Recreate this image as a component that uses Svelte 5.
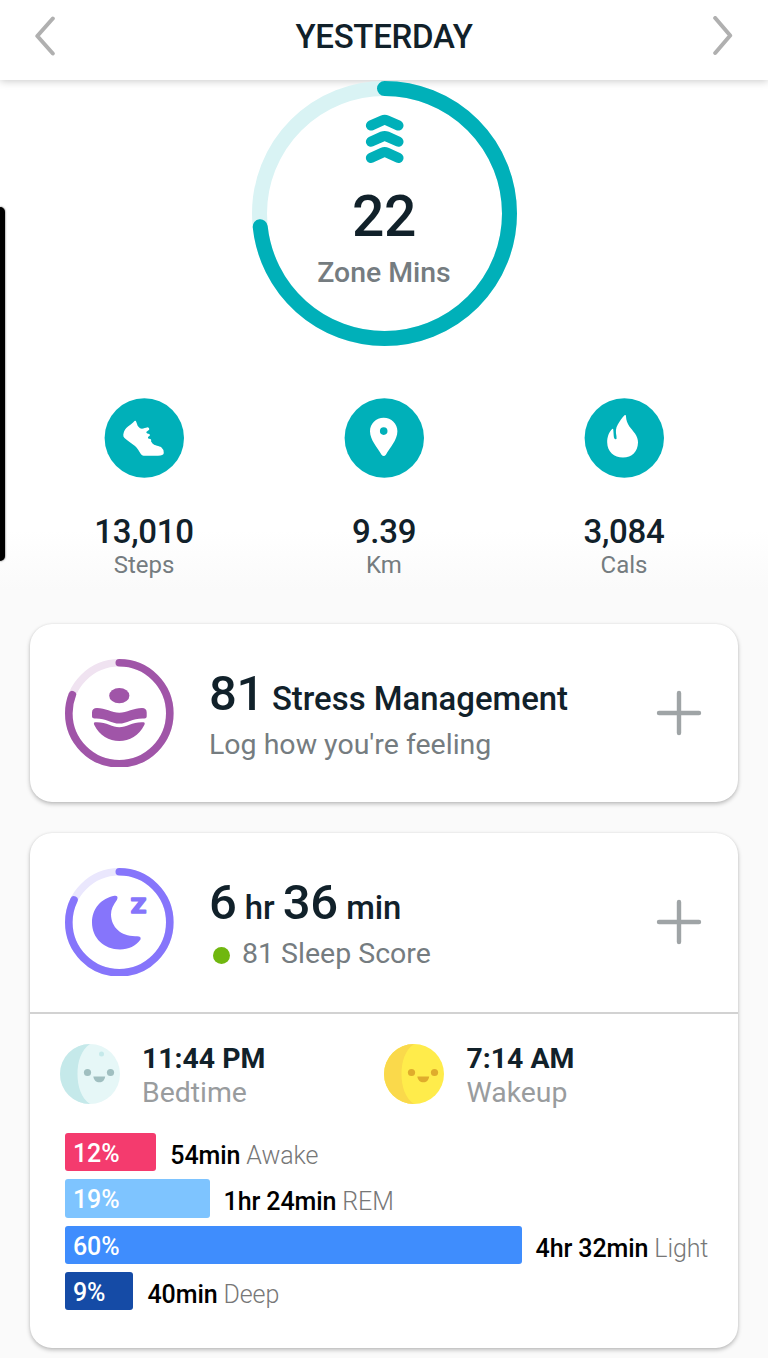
<script>
	const stats = [
		{ icon: 'shoe', value: '13,010', label: 'Steps' },
		{ icon: 'pin', value: '9.39', label: 'Km' },
		{ icon: 'flame', value: '3,084', label: 'Cals' }
	];

	const stages = [
		{ name: 'Awake', percent: 12, time: '54min', color: '#f43b6e' },
		{ name: 'REM', percent: 19, time: '1hr 24min', color: '#7ec4ff' },
		{ name: 'Light', percent: 60, time: '4hr 32min', color: '#3f8dfd' },
		{ name: 'Deep', percent: 9, time: '40min', color: '#154ba6' }
	];

	// px per percent in the sleep stage bars
	const SCALE = 7.61;
</script>

{#snippet ring(size, stroke, progress, color, track)}
	{@const r = (size - stroke) / 2}
	<svg class="ring" width={size} height={size} viewBox="0 0 {size} {size}">
		<g fill="none" stroke-width={stroke} transform="rotate(-90 {size / 2} {size / 2})">
			<circle cx={size / 2} cy={size / 2} {r} stroke={track} />
			<circle
				cx={size / 2}
				cy={size / 2}
				{r}
				stroke={color}
				stroke-linecap="round"
				pathLength="100"
				stroke-dasharray="{progress} 100"
			/>
		</g>
	</svg>
{/snippet}

{#snippet plus()}
	<button class="plus" aria-label="Add">
		<svg width="46" height="46" viewBox="0 0 46 46">
			<path d="M23 3V43M3 23H43" stroke="#9fa4a6" stroke-width="4.4" stroke-linecap="round" />
		</svg>
	</button>
{/snippet}

{#snippet face(disc, shade, features, crater)}
	<svg class="face" width="60" height="60" viewBox="0 0 60 60">
		<circle cx="30" cy="30" r="30" fill={disc} />
		<path d="M30 0A30 30 0 0 0 30 60C21 54 17.500 42 17.500 30S21 6 30 0Z" fill={shade} />
		{#if crater}
			<circle cx="41.500" cy="10" r="2.500" fill={shade} />
		{/if}
		<g fill={features}>
			<circle cx="27.500" cy="28.500" r="3.600" />
			<circle cx="50.500" cy="28.500" r="3.600" />
			<path d="M33.300 32.500H45.200C44.500 36.500 42.500 38.300 39.300 38.300S34 36.500 33.300 32.500Z" />
		</g>
	</svg>
{/snippet}

<div class="page">
	<header>
		<button class="arrow" aria-label="Previous day">
			<svg width="20" height="40" viewBox="0 0 20 40">
				<path d="M17.800 2.500L2.300 20L17.800 37.500" />
			</svg>
		</button>
		<h1>YESTERDAY</h1>
		<button class="arrow" aria-label="Next day">
			<svg width="20" height="40" viewBox="0 0 20 40">
				<path d="M2.200 2L17.200 19.500L2.200 37" />
			</svg>
		</button>
	</header>

	<section class="today">
		<div class="zone">
			{@render ring(265, 15, 73.3, '#00b0b9', '#d9f3f4')}
			<div class="zone-text">
				<svg width="39" height="50" viewBox="0 0 39 50">
					<g fill="none" stroke="#00b0b9" stroke-width="10.200" stroke-linecap="round" stroke-linejoin="round">
						<path d="M6 11.500L17.500 6.300Q19.700 5.300 21.900 6.300L33.400 11.500" />
						<path d="M6 27.700L17.500 22.500Q19.700 21.500 21.900 22.500L33.400 27.700" />
						<path d="M6 43.900L17.500 38.700Q19.700 37.700 21.900 38.700L33.400 43.900" />
					</g>
				</svg>
				<strong>22</strong>
				<span>Zone Mins</span>
			</div>
		</div>

		<div class="stats">
			{#each stats as s}
				<div class="stat">
					<svg width="80" height="80" viewBox="0 0 80 80">
						<circle cx="40.300" cy="40" r="39.700" fill="#00b0b9" />
						{#if s.icon === 'shoe'}
							<path
								fill="#fff"
								d="M30.500 23Q31.800 22 32.300 24Q33.200 28.500 36 30.300C38.500 31.500 41 29.800 43.500 29.300Q45.800 29.700 45.200 31.800L42.500 33.800Q41.800 35.100 43.300 35.400L45.200 35.900Q46.800 36.900 45.400 38L44 39Q43.500 40.500 45 40.700L46.500 41Q47.700 42 47 43.200L48.500 45.500C51 48 55 47.500 57.500 49.500Q60 51.500 59.800 55Q59.500 57.700 54 57.700H39.500Q38 57.700 37 56.300C35 53 33.500 50 31 48C27.500 45 23.500 43 20.500 40Q19 38.500 19.300 36.500C20 32.500 21.500 30.500 24 28.500C27 26.500 28.500 25 30.500 23Z"
							/>
						{:else if s.icon === 'pin'}
							<path
								fill="#fff"
								fill-rule="evenodd"
								d="M39.700 19.700C32 19.700 26 25.700 26 33.200C26 42 33.500 49.500 37.500 56.700Q39.700 59.300 41.900 56.700C45.900 49.500 53.400 42 53.400 33.200C53.400 25.700 47.400 19.700 39.700 19.700ZM39.700 29.300A3.800 3.800 0 1 1 39.700 36.900A3.800 3.800 0 1 1 39.700 29.300Z"
							/>
						{:else}
							<path
								fill="#fff"
								d="M40.500 17.300Q42 16.500 42 18.500C42.200 26.500 47.500 30.500 51 35.500C53 38.500 54 41.500 54 44.500C53.800 53.500 48 59.500 39 59.500C30 59.500 23.300 53.500 23.200 44.500C23 39.500 24.800 34 28.200 30.900Q29.200 30.300 29.300 31.800L29.700 37.500Q29.900 41.300 31.600 41.300Q33 41.200 32.500 38.500C31.500 33.500 31.600 30 33.800 26.500C35.800 23 38 20 40.500 17.300Z"
							/>
						{/if}
					</svg>
					<strong>{s.value}</strong>
					<span>{s.label}</span>
				</div>
			{/each}
		</div>
	</section>

	<section class="card">
		<div class="row">
			<div class="badge">
				{@render ring(108.6, 7.6, 81, '#a055a8', '#f0e3f1')}
				<svg class="glyph" width="109" height="109" viewBox="0 0 109 109" fill="#a055a8">
					<ellipse cx="54.300" cy="36.700" rx="10.100" ry="7.600" />
					<path
						d="M27 53.500Q27 49 32 49C40 49 47 53.700 54.300 53.700S69 49 77 49Q81.700 49 81.700 53.500V57.500Q81.700 59.700 79 59.500C68 59 62 64.600 54.300 64.600S40 59 30 59.500Q27 59.700 27 57.500Z"
					/>
					<path
						d="M30 63.200C41 62.500 47 68.200 54.300 68.200S68 62.500 78.500 63.200Q80.500 63.700 79.300 66C74 76.500 64.500 82 54.300 82S34.500 76.500 29.300 66Q28.200 63.600 30 63.200Z"
					/>
				</svg>
			</div>
			<div class="info">
				<p class="main"><b class="score">81</b><span>Stress Management</span></p>
				<p class="sub">Log how you're feeling</p>
			</div>
			{@render plus()}
		</div>
	</section>

	<section class="card">
		<div class="row">
			<div class="badge">
				{@render ring(108.6, 7.6, 82.3, '#8675fb', '#eae7fd')}
				<svg class="glyph" width="109" height="109" viewBox="0 0 109 109" fill="#8675fb">
					<path
						d="M49.500 27.700Q53.800 27.300 52 31.800C48 37.500 46 41.500 46 46.500C46.200 59.500 56.500 68.800 71.500 68.200Q76.500 68 75.500 71.500C71 78 63.500 81.500 55 81.500C39 81.500 27 70 27 54.500C27 40.500 36.500 30 49.500 27.700Z"
					/>
					<text
						class="zed"
						x="66"
						y="44.800"
						textLength="15"
						lengthAdjust="spacingAndGlyphs">Z</text>
				</svg>
			</div>
			<div class="info">
				<p class="main sleep"><b>6</b> <span>hr</span> <b>36</b> <span>min</span></p>
				<p class="sub"><i class="dot"></i>81 Sleep Score</p>
			</div>
			{@render plus()}
		</div>

		<div class="times">
			<div class="time">
				{@render face('#e6f7f7', '#c5e9ea', '#a0bfc0', true)}
				<div>
					<strong>11:44 PM</strong>
					<span>Bedtime</span>
				</div>
			</div>
			<div class="time">
				{@render face('#ffec4b', '#fad94b', '#dfac2c', false)}
				<div>
					<strong>7:14 AM</strong>
					<span>Wakeup</span>
				</div>
			</div>
		</div>

		<div class="stages">
			{#each stages as s}
				<div class="stage">
					<div class="bar" style="width: {s.percent * SCALE}px; background: {s.color}">{s.percent}%</div>
					<p><b>{s.time}</b> {s.name}</p>
				</div>
			{/each}
		</div>
	</section>

	<div class="edge-handle"></div>
</div>

<style>
	:global(body) {
		margin: 0;
		background: #fafafa;
	}

	.page {
		position: relative;
		height: 1358px;
		overflow: hidden;
		font-family: Roboto, sans-serif;
		color: #11212a;
		background: linear-gradient(#fff 530px, #fafafa 590px);
	}

	h1,
	p {
		margin: 0;
	}

	b,
	strong {
		font-weight: 500;
	}

	button {
		padding: 0;
		border: none;
		background: none;
	}

	svg {
		display: block;
	}

	header {
		display: flex;
		justify-content: space-between;
		height: 80px;
		padding: 0 35px;
		box-sizing: border-box;
		background: #fff;
		box-shadow: 0 1px 8px rgba(0, 0, 0, 0.22);
	}

	h1 {
		font-size: 33px;
		font-weight: 500;
		line-height: 74px;
		letter-spacing: -0.3px;
	}

	.arrow {
		height: 71px;
	}

	.arrow path {
		fill: none;
		stroke: #b0b0b0;
		stroke-width: 4;
		stroke-linecap: round;
		stroke-linejoin: round;
	}

	/* ring and its text share one grid cell */
	.zone {
		display: grid;
		justify-content: center;
		height: 266px;
		padding-top: 0.5px;
		box-sizing: border-box;
		position: relative;
	}

	.zone > :global(*) {
		grid-area: 1 / 1;
	}

	.zone-text {
		display: flex;
		flex-direction: column;
		align-items: center;
		padding-top: 33.500px;
	}

	.zone-text strong {
		margin-top: 24px;
		font-size: 57px;
		line-height: 58px;
		letter-spacing: -0.5px;
	}

	.zone-text span {
		margin-top: 10px;
		font-size: 28.400px;
		font-weight: 500;
		line-height: 34px;
		color: #757c80;
	}

	.stats {
		display: flex;
		padding: 52px 24px 44px;
	}

	.stat {
		flex: 1;
		display: flex;
		flex-direction: column;
		align-items: center;
		height: 182px;
	}

	.stat strong {
		margin-top: 37px;
		font-size: 33px;
		line-height: 34px;
		letter-spacing: -0.3px;
	}

	.stat span {
		margin-top: 1px;
		font-size: 24px;
		line-height: 30px;
		color: #757c80;
	}

	.card {
		margin: 0 30px 31px;
		border-radius: 22px;
		background: #fff;
		box-shadow: 0 2px 4px rgba(0, 0, 0, 0.25), 0 0 2px rgba(0, 0, 0, 0.08);
	}

	.row {
		display: flex;
		height: 178px;
		padding: 0 36px 0 35px;
	}

	.badge {
		display: grid;
		align-content: start;
		width: 109px;
		padding-top: 34.700px;
	}

	.badge > :global(*) {
		grid-area: 1 / 1;
	}

	.zed {
		font-size: 20px;
		font-weight: 900;
		stroke: #8675fb;
		stroke-width: 1.5px;
		stroke-linejoin: round;
	}

	.info {
		flex: 1;
		padding: 43px 0 0 35px;
	}

	.main {
		font-size: 32.900px;
		font-weight: 500;
		line-height: 54px;
		height: 54px;
		white-space: nowrap;
	}

	.main b {
		font-size: 49px;
	}

	.sleep {
		letter-spacing: -0.1px;
	}

	.score {
		margin-right: 8px;
		letter-spacing: -0.4px;
	}

	.sub {
		display: flex;
		align-items: center;
		margin-top: 7px;
		font-size: 28.500px;
		line-height: 34px;
		color: #757c80;
	}

	.dot {
		width: 17px;
		height: 17px;
		margin: 3px 12px 0 4px;
		border-radius: 50%;
		background: #70b70f;
	}

	.plus {
		align-self: center;
	}

	.times {
		display: flex;
		margin-top: 0.5px;
		padding: 28.500px 29.500px 0;
		border-top: 2px solid #d2d2d2;
	}

	.time {
		display: flex;
		gap: 22.500px;
		width: 324.500px;
	}

	.face {
		margin-top: 1.500px;
	}

	.time strong,
	.time span {
		display: block;
		font-size: 28.400px;
		line-height: 34px;
	}

	.time strong {
		font-weight: 700;
	}

	.time span {
		color: #999c9e;
	}

	.stages {
		display: flex;
		flex-direction: column;
		gap: 8px;
		padding: 23px 0 37.500px 35px;
	}

	.stage {
		display: flex;
		gap: 14px;
		height: 38.300px;
	}

	.bar {
		box-sizing: border-box;
		padding-left: 8px;
		border-radius: 3px;
		font-size: 25px;
		font-weight: 500;
		line-height: 42px;
		letter-spacing: -0.1px;
		color: #fff;
	}

	.stage p {
		font-size: 25px;
		font-weight: 300;
		line-height: 46px;
		letter-spacing: -0.1px;
		white-space: nowrap;
		color: #777;
	}

	.stage b {
		color: #000;
	}

	/* system edge panel handle, floats over the page */
	.edge-handle {
		position: absolute;
		top: 207px;
		left: 0;
		width: 5px;
		height: 354px;
		border-radius: 0 5px 5px 0;
		background: #000;
		box-shadow: 0 0 2px rgba(0, 0, 0, 0.8);
	}
</style>
